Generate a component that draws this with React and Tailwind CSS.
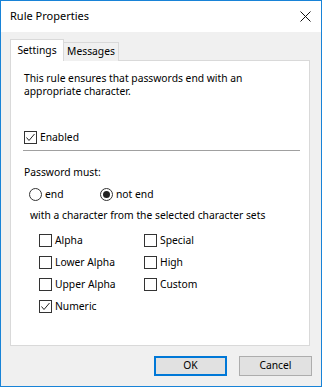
import React from 'react';

const Check = () => (
  <svg width="11" height="11" viewBox="0 0 11 11" className="block">
    <path d="M1.5 5.5 L4 8.5 L9.5 2" fill="none" stroke="#222" strokeWidth="1" />
  </svg>
);

const CheckBox = ({ label, checked }) => (
  <div className="flex h-[13px] items-center">
    <span className="flex h-[13px] w-[13px] shrink-0 items-center justify-center border border-[#333] bg-white">
      {checked && <Check />}
    </span>
    <span className="ml-[3px] leading-[13px]">{label}</span>
  </div>
);

const Radio = ({ label, selected }) => (
  <div className="flex h-[13px] items-center">
    <span className="flex h-[13px] w-[13px] shrink-0 items-center justify-center rounded-full border border-[#333] bg-white">
      {selected && <span className="h-[7px] w-[7px] rounded-full bg-[#222]" />}
    </span>
    <span className="ml-[3px] leading-[13px]">{label}</span>
  </div>
);

const App = () => {
  return (
    <div className="flex h-[387px] w-[322px] flex-col border border-[#1883d7] bg-[#f0f0f0] font-['Noto_Sans',sans-serif] text-[10.3px] text-black">
      {/* title bar */}
      <div className="flex h-[31px] items-center justify-between bg-white pl-[9px] pr-[10px]">
        <span className="text-[11px]">Rule Properties</span>
        <svg width="11" height="11" viewBox="0 0 11 11">
          <path d="M0.5 0.5 L10.5 10.5 M10.5 0.5 L0.5 10.5" stroke="#111" strokeWidth="1" />
        </svg>
      </div>

      <div className="flex flex-1 flex-col pl-[9px] pt-[7px]">
        {/* tabs */}
        <div className="relative z-10 -mb-px flex items-end">
          <div className="flex h-[22px] w-[54px] items-center justify-center border border-b-0 border-[#d9d9d9] bg-white">
            Settings
          </div>
          <div className="flex h-[19px] w-[55px] items-center justify-center border border-b-0 border-l-0 border-[#d9d9d9] bg-[#f0f0f0]">
            Messages
          </div>
        </div>

        {/* panel */}
        <div className="flex h-[286px] w-[300px] flex-col border border-[#d9d9d9] bg-white pl-[13px]">
          <p className="mt-[11px] leading-[13px]">
            This rule ensures that passwords end with an
            <br />
            appropriate character.
          </p>

          <div className="mt-[33px]">
            <CheckBox label="Enabled" checked />
          </div>

          <div className="ml-[-1px] mt-[6px] h-px w-[277px] bg-[#a0a0a0]" />

          <p className="mt-[15px] leading-[12px]">Password must:</p>

          <div className="mt-[10px] flex pl-[5px]">
            <div className="w-[71px]">
              <Radio label="end" />
            </div>
            <Radio label="not end" selected />
          </div>

          <p className="mt-[8px] pl-[6px] leading-[12px]">with a character from the selected character sets</p>

          <div className="mt-[13px] grid w-[200px] grid-cols-[105px_1fr] gap-y-[9px] pl-[15px]">
            <CheckBox label="Alpha" />
            <CheckBox label="Special" />
            <CheckBox label="Lower Alpha" />
            <CheckBox label="High" />
            <CheckBox label="Upper Alpha" />
            <CheckBox label="Custom" />
            <CheckBox label="Numeric" checked />
          </div>
        </div>

        {/* buttons */}
        <div className="mt-[10px] flex w-[302px] justify-end gap-[12px]">
          <button className="h-[20px] w-[73px] border-2 border-[#0078d7] bg-[#e1e1e1]">OK</button>
          <button className="h-[20px] w-[73px] border border-[#adadad] bg-[#e1e1e1]">Cancel</button>
        </div>
      </div>
    </div>
  );
};

export default App;
